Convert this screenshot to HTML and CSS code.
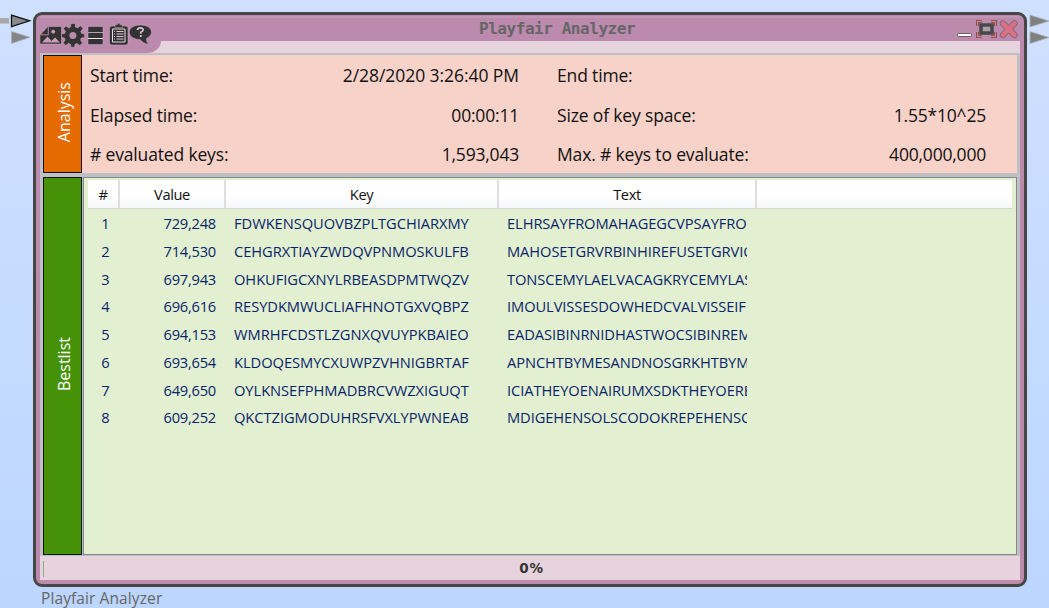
FILE: index.html
```
<!DOCTYPE html>
<html lang="en">
<head>
<meta charset="utf-8">
<title>Playfair Analyzer</title>
<link rel="stylesheet" href="styles.css">
</head>
<body>
<main class="workspace">
  <svg class="connectors connectors-in" width="33" height="50" viewBox="0 0 33 50">
    <path d="M0 20.800H9" stroke="#a8a8a8" stroke-width="5.500"/>
    <path d="M11.500 15.200L29.500 20.800L11.500 26.500Z" fill="#8a8a8a" stroke="#111" stroke-width="1.300"/>
    <path d="M11.500 31.500L30 37.300L11.500 43.500Z" fill="#858585" stroke="#aab0b8" stroke-width=".8"/>
  </svg>
  <svg class="connectors connectors-out" width="23" height="50" viewBox="0 0 23 50">
    <path d="M4 15L23 21L4 27Z" fill="#808080" stroke="#aab0b8" stroke-width=".8"/>
    <path d="M4 31.500L23 37.500L4 43.500Z" fill="#808080" stroke="#aab0b8" stroke-width=".8"/>
  </svg>
  <section class="window">
    <header class="titlebar">
      <nav class="tools">
        <svg width="120" height="29" viewBox="0 0 120 29">
          <g fill="#333" stroke="#d1abc4" stroke-width=".5">
            <path d="M0 22V13L8 4.500H21.500V22Z"/>
            <path d="M31 1.500H35L35.500 5L37.500 6L40.500 3.800L43 6.500L40.800 9.400L41.600 11.400L44.500 12V15.500L41.300 16L40.500 18L42.500 21L39.800 23.500L37 21.500L35 22.300L34.500 25.200H31L30.500 22.200L28.500 21.300L25.700 23.400L23.200 20.700L25.200 18L24.400 16L21.500 15.300V12L24.700 11.400L25.500 9.400L23.500 6.500L26 4L28.800 6L30.500 5Z"/>
            <path d="M48 4.500H63V22.500H48Z"/>
            <rect x="69.500" y="4" width="18.500" height="19" rx="2.500"/>
            <path d="M75 4.500V2.700H77Q78.500 0 80.300 2.700H82.500V5.500H75Z"/>
            <path d="M100.500 3C94 3 89.300 6 89.300 10.200C89.300 14.500 94 17.500 100 17.500Q103 21.500 108.500 22.300Q106 19.500 106.500 16.500Q111.500 14 111.500 10.200C111.500 6 107 3 100.500 3Z"/>
          </g>
          <circle cx="32.900" cy="13.400" r="3.500" fill="#bb8aad"/>
          <path d="M2 20.500L7.500 14.500L11.500 19L15 15.500L20 20.500Z" fill="#c99bbb"/>
          <circle cx="13.200" cy="9.700" r="1.900" fill="#c99bbb"/>
          <path d="M.5 12.800H8.300V4.500" fill="none" stroke="#b994ae" stroke-width=".9"/>
          <path d="M48 10.500H63" stroke="#b1a5ac" stroke-width="1"/>
          <path d="M48 16.500H63" stroke="#efe4eb" stroke-width="1"/>
          <path d="M72.500 7H85V20H72.500Z" fill="none" stroke="#ead9e4" stroke-width="1"/>
          <path d="M74 9.500H75M76.500 9.500H83.500M74 12H75M76.500 12H83.500M74 14.500H75M76.500 14.500H83.500M74 17H75M76.500 17H83.500" stroke="#d9c8d3"/>
          <path d="M97.500 8Q97.800 5.900 100.300 5.900Q103.300 5.900 103.100 8Q103 9.200 100.800 10.300V11.700M100.800 12.900V14.900" fill="none" stroke="#d9bfd0" stroke-width="1.800"/>
        </svg>
      </nav>
      <h1 class="title">Playfair Analyzer</h1>
      <svg class="controls" width="66" height="25" viewBox="954 16 66 25">
        <rect x="957.500" y="33.500" width="14" height="3" rx="1" fill="#fff" stroke="#6c5966"/>
        <g fill="none" stroke="#63535d" stroke-width="3">
          <path d="M977.500 26V21.500H982M991 21.500H995.500V26M995.500 32V36.500H991M982 36.500H977.500V32"/>
          <path stroke="#ed7975" stroke-width="1.300" d="M977.500 26V21.500H982M991 21.500H995.500V26M995.500 32V36.500H991M982 36.500H977.500V32"/>
        </g>
        <rect x="981" y="25" width="11" height="8" fill="#aaa0a8" stroke="#484848" stroke-width="3.500"/>
        <path d="M1003 23.500L1014.500 35M1014.500 23.500L1003 35" stroke="#8c6879" stroke-width="6.500" stroke-linecap="round"/>
        <path d="M1003 23.500L1014.500 35M1014.500 23.500L1003 35" stroke="#dc7183" stroke-width="4.500" stroke-linecap="round"/>
      </svg>
    </header>
    <div class="subbar"><div class="tab"></div></div>
    <div class="content">
      <div class="side analysis-label"><span>Analysis</span></div>
      <dl class="analysis">
        <dt>Start time:</dt><dd class="date">2/28/2020 3:26:40 PM</dd><dt>End time:</dt><dd></dd>
        <dt>Elapsed time:</dt><dd>00:00:11</dd><dt>Size of key space:</dt><dd>1.55*10^25</dd>
        <dt># evaluated keys:</dt><dd>1,593,043</dd><dt>Max. # keys to evaluate:</dt><dd>400,000,000</dd>
      </dl>
      <div class="side best-label"><span>Bestlist</span></div>
      <div class="bestlist">
        <div class="row head"><span>#</span><span>Value</span><span>Key</span><span>Text</span><span></span></div>
        <div class="row"><span>1</span><span>729,248</span><span>FDWKENSQUOVBZPLTGCHIARXMY</span><span>ELHRSAYFROMAHAGEGCVPSAYFRO</span></div>
        <div class="row"><span>2</span><span>714,530</span><span>CEHGRXTIAYZWDQVPNMOSKULFB</span><span>MAHOSETGRVRBINHIREFUSETGRVIO</span></div>
        <div class="row"><span>3</span><span>697,943</span><span>OHKUFIGCXNYLRBEASDPMTWQZV</span><span>TONSCEMYLAELVACAGKRYCEMYLAS</span></div>
        <div class="row"><span>4</span><span>696,616</span><span>RESYDKMWUCLIAFHNOTGXVQBPZ</span><span>IMOULVISSESDOWHEDCVALVISSEIF</span></div>
        <div class="row"><span>5</span><span>694,153</span><span>WMRHFCDSTLZGNXQVUYPKBAIEO</span><span>EADASIBINRNIDHASTWOCSIBINREM</span></div>
        <div class="row"><span>6</span><span>693,654</span><span>KLDOQESMYCXUWPZVHNIGBRTAF</span><span>APNCHTBYMESANDNOSGRKHTBYM</span></div>
        <div class="row"><span>7</span><span>649,650</span><span>OYLKNSEFPHMADBRCVWZXIGUQT</span><span>ICIATHEYOENAIRUMXSDKTHEYOERE</span></div>
        <div class="row"><span>8</span><span>609,252</span><span>QKCTZIGMODUHRSFVXLYPWNEAB</span><span>MDIGEHENSOLSCODOKREPEHENSO</span></div>
      </div>
    </div>
    <footer class="progress"><i></i><b>0%</b></footer>
  </section>
  <div class="caption">Playfair Analyzer</div>
</main>
</body>
</html>
```
FILE: styles.css
```
* { box-sizing: border-box; }
body { margin: 0; width: 1049px; height: 608px; overflow: hidden; font-family: "Open Sans", "Noto Sans", sans-serif; }
.workspace { position: relative; width: 1049px; height: 608px; padding: 12px 0 0 33px; background: linear-gradient(#cfe0ff, #bcd6ff); }
.connectors { position: absolute; top: 0; }
.connectors-in { left: 0; }
.connectors-out { left: 1026px; }
.window { width: 994px; height: 575px; padding: 1px 3px 3px; border: 3px solid #464646; border-radius: 9px; background: #bb8aad; display: flex; flex-direction: column; }
.titlebar { flex: none; height: 25px; display: grid; grid-template-columns: 120px 1fr 66px; margin: 0 1px; position: relative; z-index: 1; border-top: 2px solid #c295b5; }
.tools { height: 29px; padding-top: 4px; }
.tools svg, .controls { display: block; }
.controls { margin-top: -2px; }
.title { margin: 0; padding-left: 319px; font: bold 16px/22px "DejaVu Sans Mono", monospace; letter-spacing: -.45px; color: #666; white-space: nowrap; }
.subbar { flex: none; height: 12px; background: #e6d3de; margin: 0 1px; }
.tab { width: 121px; height: 12px; background: #bb8aad; border-bottom-right-radius: 14px 12px; }
.content { flex: none; height: 503px; margin: 0 1px; padding: 2px 3px 1px; background: #c0c0c4; display: grid; grid-template-columns: 40px 1fr; grid-template-rows: 118px 378px; row-gap: 4px; }
.side { margin-right: 1px; border: 1px solid #111; display: flex; align-items: center; justify-content: center; color: #fff; font-size: 16px; }
.side span { writing-mode: vertical-rl; transform: rotate(180deg); line-height: 20px; letter-spacing: 0; margin: 0 0 3px 2px; }
.analysis-label { background: #e56b00; }
.best-label { background: #459209; }
.analysis { margin: 0 0 0 -1px; padding: 1px 31px 0 8px; background: #f7d2c8; display: grid; grid-template-columns: 175px 254px 205px 1fr; grid-template-rows: repeat(3, 39.500px); font-size: 17.500px; line-height: 39px; letter-spacing: -.16px; color: #111; }
.analysis dt { white-space: nowrap; }
.analysis dd { margin: 0; text-align: right; white-space: nowrap; letter-spacing: -.2px; }
.analysis .date { letter-spacing: -.06px; }
.analysis dt:nth-of-type(even) { padding-left: 38px; }
.bestlist { border: 1px solid #828790; background: #e2f0d1; padding: 2px 4px; min-width: 0; overflow: hidden; font-size: 14.700px; letter-spacing: -.05px; color: #0a246a; }
.row { display: grid; grid-template-columns: 32px 106px 273px 258px 1fr; height: 27.750px; line-height: 28px; }
.row span { white-space: nowrap; overflow: hidden; }
.row span:nth-child(1) { text-align: center; padding-left: 3px; }
.row span:nth-child(2) { text-align: right; padding-right: 10px; letter-spacing: -.25px; }
.row span:nth-child(3) { padding-left: 8px; }
.row span:nth-child(4) { margin: 0 10px 0 8px; letter-spacing: -.09px; }
.row.head { height: 29px; line-height: 28px; color: #111; background: linear-gradient(#fff 50%, #f7f8fa); border-bottom: 1px solid #d5d5d5; }
.row.head span:nth-child(n) { text-align: center; margin: 0; padding: 0; border-right: 2px solid #dedede; letter-spacing: -.4px; }
.row.head span:last-child { border: 0; }
.progress { flex: none; height: 24px; margin: 0 1px; background: #e6d3de; display: flex; align-items: center; position: relative; justify-content: center; font: bold 13.500px "DejaVu Sans", sans-serif; letter-spacing: .9px; color: #333; }
.progress i { position: absolute; left: 3px; top: 5px; width: 1px; height: 16px; background: #8cad91; }
.progress b { padding-left: 3px; }
.caption { margin: 2px 0 0 8px; font-size: 15.500px; line-height: 19px; letter-spacing: .1px; color: #666; }
```
